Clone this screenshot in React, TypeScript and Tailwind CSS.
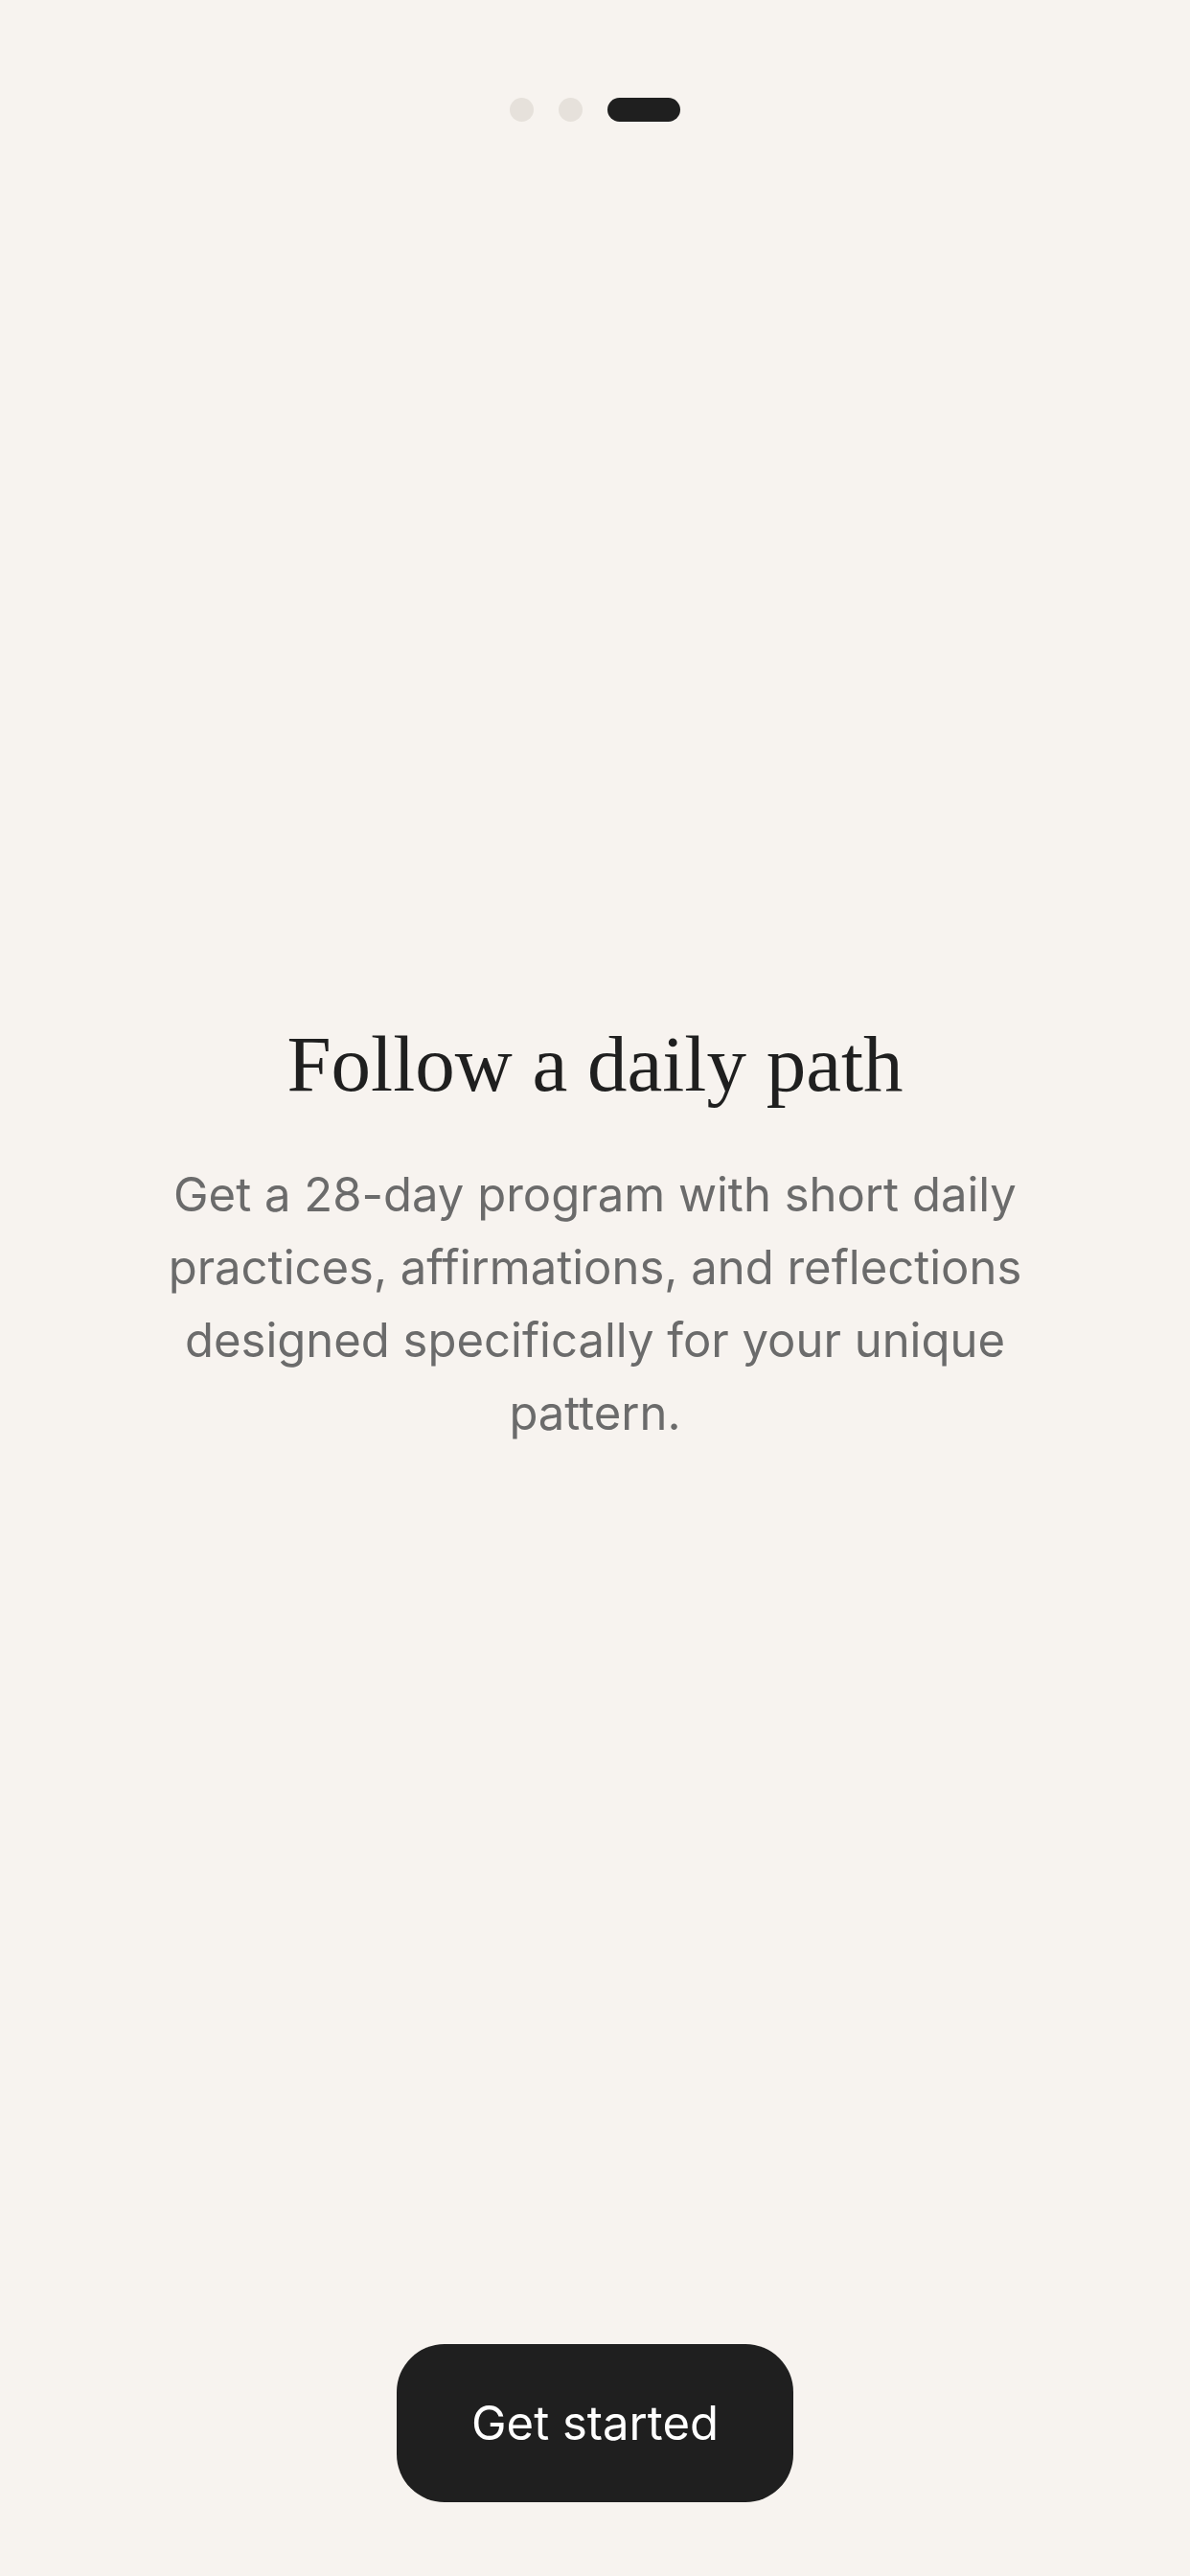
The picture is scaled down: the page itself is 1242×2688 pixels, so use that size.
import React from "react";

export default function App() {
  return (
    <div className="min-h-screen w-full bg-[#f7f3ef] flex flex-col items-center" style={{ minHeight: 2688 }}>
      <div className="pt-[102px] flex items-center gap-[26px]">
        <div className="w-[25px] h-[25px] rounded-full bg-[#e6e1db]" />
        <div className="w-[25px] h-[25px] rounded-full bg-[#e6e1db]" />
        <div className="w-[76px] h-[25px] rounded-full bg-[#1f1f1f]" />
      </div>
      <div className="flex-1 flex flex-col items-center justify-center w-full px-[160px]">
        <h1 className="text-[83px] leading-[98px] text-[#1f1f1f] text-center font-['Liberation_Serif',serif] font-normal">
          Follow a daily path
        </h1>
        <p className="mt-[50px] max-w-[920px] text-center text-[49px] leading-[76px] text-[#6b6b6b] font-['Inter',sans-serif]">
          Get a 28-day program with short daily practices, affirmations, and reflections designed specifically for your unique pattern.
        </p>
      </div>
      <div className="pb-[77px]">
        <button className="w-[414px] h-[165px] rounded-[50px] bg-[#1f1f1f] text-white text-[49px] font-['Inter',sans-serif] flex items-center justify-center">
          Get started
        </button>
      </div>
    </div>
  );
}
